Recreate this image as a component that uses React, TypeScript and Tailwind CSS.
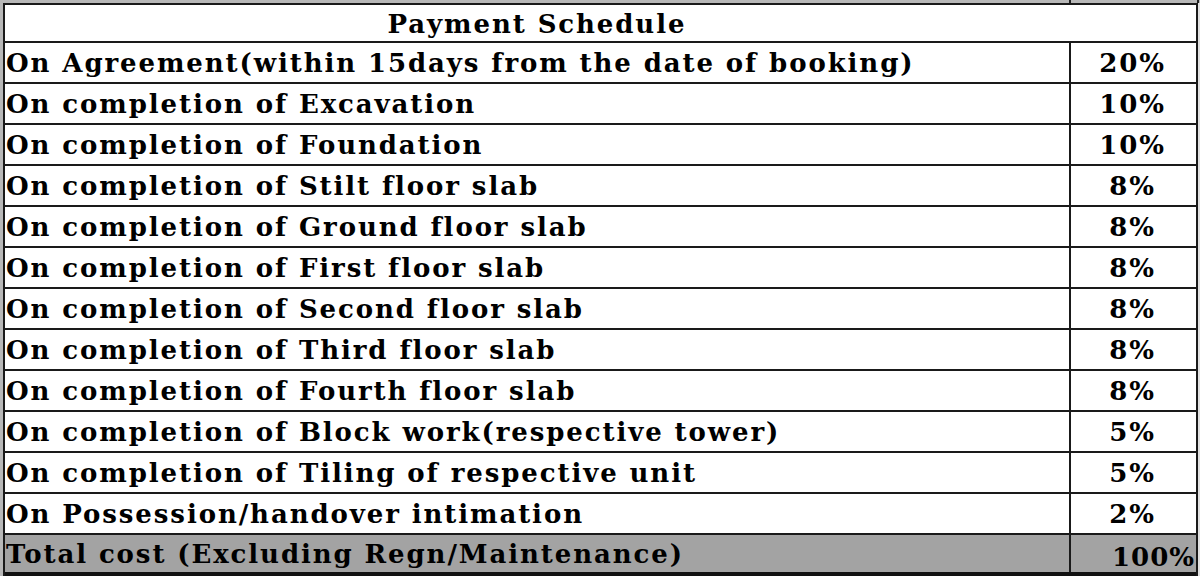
import React from "react";

const rows: [string, string][] = [
  ["On Agreement(within 15days from the date of booking)", "20%"],
  ["On completion of Excavation", "10%"],
  ["On completion of Foundation", "10%"],
  ["On completion of Stilt floor slab", "8%"],
  ["On completion of Ground floor slab", "8%"],
  ["On completion of First floor slab", "8%"],
  ["On completion of Second floor slab", "8%"],
  ["On completion of Third floor slab", "8%"],
  ["On completion of Fourth floor slab", "8%"],
  ["On completion of Block work(respective tower)", "5%"],
  ["On completion of Tiling of respective unit", "5%"],
  ["On Possession/handover intimation", "2%"],
];

export default function App() {
  return (
    <div
      className="w-[1200px] h-[576px] overflow-hidden bg-white text-black flex flex-col"
      style={{ fontFamily: '"DejaVu Serif", "Liberation Serif", serif' }}
    >
      <div className="h-[3px] shrink-0 bg-[#b8b8b8] grid grid-cols-[1069px_2px_126px_2px_1px]">
        <div />
        <div className="bg-[#222]" />
        <div />
        <div className="bg-[#222]" />
        <div />
      </div>
      <div className="flex flex-1">
        <div className="w-[3px] bg-[#b8b8b8] shrink-0" />
        <div className="w-[1195px] border-l-2 border-r-2 border-[#1a1a1a] flex flex-col font-bold tracking-[1.9px]">
          <div className="h-[40px] shrink-0 border-t-2 border-b-2 border-[#1a1a1a] grid grid-cols-[1064px_1fr] items-center">
            <div className="text-center text-[26px] leading-none pt-[2px]">Payment Schedule</div>
            <div />
          </div>
          {rows.map(([label, pct], i) => (
            <div
              key={i}
              className="h-[41px] shrink-0 border-b-2 border-[#1a1a1a] grid grid-cols-[1064px_2px_1fr] items-center"
            >
              <div className="pl-[1px] pt-[1px] text-[26px] leading-none whitespace-nowrap">{label}</div>
              <div className="h-full bg-[#1a1a1a]" />
              <div className="text-center pt-[1px] text-[26px] leading-none pr-[2px]">{pct}</div>
            </div>
          ))}
          <div className="flex-1 bg-[#a3a3a3] border-b-4 border-[#111] grid grid-cols-[1064px_2px_1fr] items-center">
            <div className="pl-[1px] text-[26px] leading-none whitespace-nowrap">
              Total cost (Excluding Regn/Maintenance)
            </div>
            <div className="h-full bg-[#1a1a1a]" />
            <div className="text-right text-[26px] leading-none tracking-[1px] pr-[1px] pt-[6px]">100%</div>
          </div>
        </div>
        <div className="flex-1 bg-[#e0e0e0]" />
      </div>
    </div>
  );
}
